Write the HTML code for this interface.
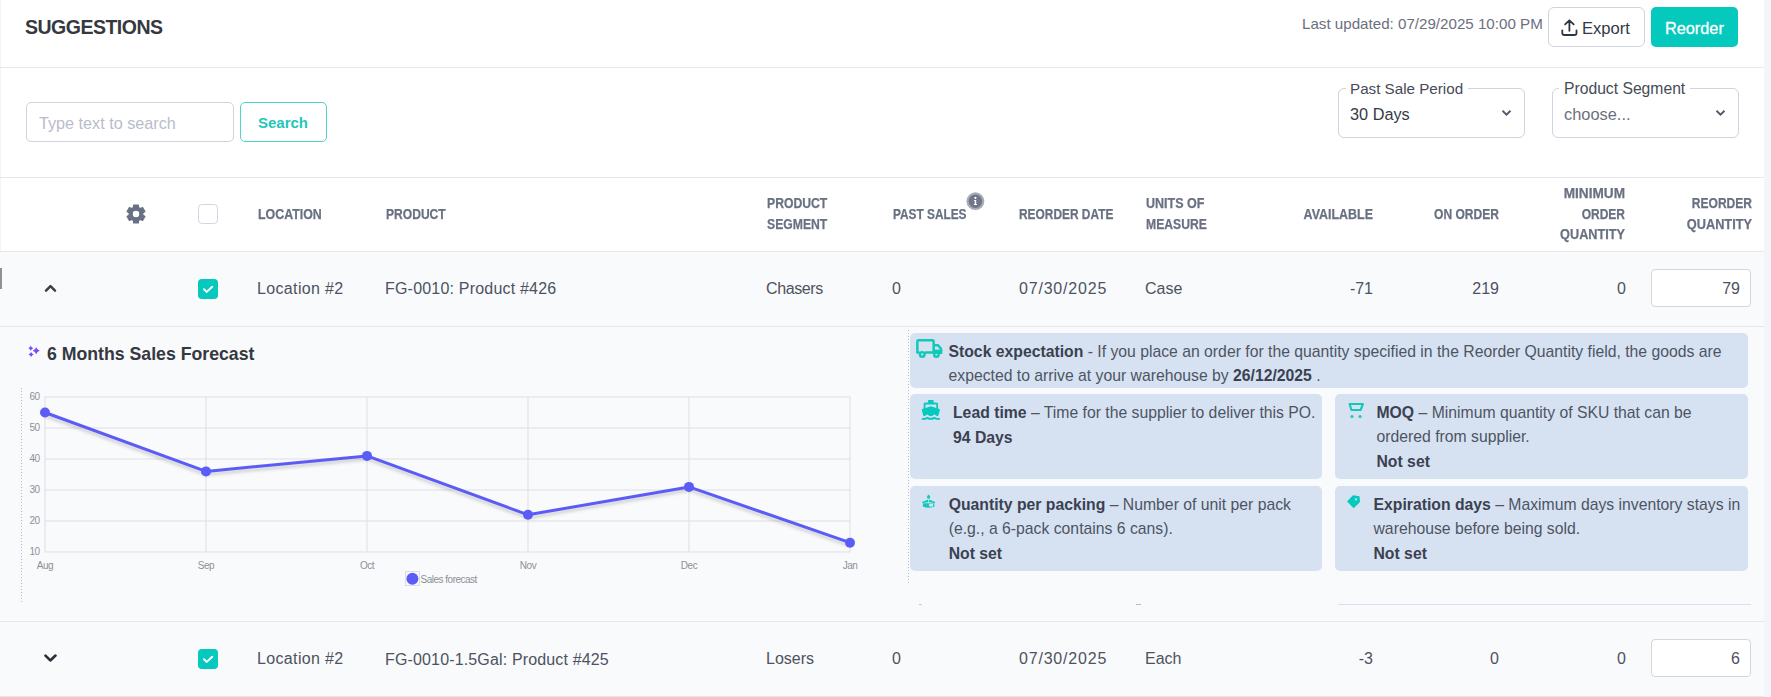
<!DOCTYPE html>
<html><head><meta charset="utf-8">
<style>
*{box-sizing:border-box;margin:0;padding:0}
html,body{width:1771px;height:697px;overflow:hidden;background:#f4f5f9;font-family:"Liberation Sans",sans-serif;color:#3f4451}
.a{position:absolute;white-space:nowrap}
#card{position:absolute;left:0;top:0;width:1764px;height:697px;background:#fff}
#lb{position:absolute;left:0;top:0;width:1px;height:697px;background:#f3f4f6}
.hl{position:absolute;left:0;height:1px;background:#e5e7eb}
.th{position:absolute;font-weight:bold;font-size:14.5px;color:#697081;-webkit-text-stroke:0.25px #697081;line-height:20.7px;white-space:nowrap;transform:scaleX(.845);transform-origin:0 0}
.th.r{transform-origin:100% 0;text-align:right}
.td{position:absolute;font-size:16px;color:#4d5260;white-space:nowrap;line-height:20px}
.r{text-align:right}
.cb{position:absolute;width:20px;height:20px;border-radius:4px}
.cb.on{background:#04c9bc}
.cb.off{border:1.5px solid #d3d5e1;background:#fff}
.box{position:absolute;background:#d6e2f2;border-radius:5px}
.it{position:absolute;font-size:15.75px;line-height:24.5px;color:#4e5462;white-space:nowrap}
.it b{color:#3b4150}
</style></head>
<body>
<div id="card">
<div id="lb"></div>
  <!-- header -->
  <div class="a" style="left:25px;top:15px;font-size:19.5px;letter-spacing:-0.5px;font-weight:bold;color:#353840;line-height:24px">SUGGESTIONS</div>
  <div class="a" style="left:1302px;top:14px;font-size:15.15px;color:#6b7080;line-height:20px">Last updated: 07/29/2025 10:00 PM</div>
  <div class="a" style="left:1547.5px;top:7px;width:97px;height:40px;border:1.5px solid #d0d3e0;border-radius:6px;background:#fff"></div>
  <svg class="a" style="left:1560px;top:19px" width="19" height="18" viewBox="0 0 19 18"><path d="M9.4 11.8V1.8M5.1 5.3L9.4 1.3l4.3 4M2.3 11.3v2.6Q2.3 16 4.4 16H14.4Q16.5 16 16.5 13.9V11.3" fill="none" stroke="#2f3440" stroke-width="1.8" stroke-linecap="round" stroke-linejoin="round"/></svg>
  <div class="a" style="left:1582px;top:19px;font-size:16.6px;color:#333844;line-height:20px">Export</div>
  <div class="a" style="left:1651px;top:7px;width:87px;height:40px;border-radius:5px;background:#04c9bc"></div>
  <div class="a" style="left:1665px;top:18px;font-size:16.3px;color:#fff;line-height:20px;-webkit-text-stroke:0.3px #fff">Reorder</div>
  <div class="hl" style="top:67px;width:1764px"></div>

  <!-- search -->
  <div class="a" style="left:25.5px;top:102px;width:208.5px;height:40px;border:1.5px solid #d0d3e0;border-radius:5px;background:#fff"></div>
  <div class="a" style="left:39px;top:113px;font-size:16.2px;color:#b9bdcb;line-height:20px">Type text to search</div>
  <div class="a" style="left:239.5px;top:102px;width:87.5px;height:40px;border:1.5px solid #4fd4c9;border-radius:5px;background:#fff"></div>
  <div class="a" style="left:258px;top:113px;font-size:15px;font-weight:bold;color:#1fc6b9;line-height:20px">Search</div>

  <!-- selects -->
  <div class="a" style="left:1337.5px;top:88px;width:187.5px;height:50px;border:1.5px solid #d0d3e0;border-radius:6px"></div>
  <div class="a" style="left:1346px;top:80px;width:122px;height:12px;background:#fff"></div>
  <div class="a" style="left:1350px;top:79px;font-size:15.2px;color:#464b57;line-height:20px">Past Sale Period</div>
  <div class="a" style="left:1350px;top:104px;font-size:16.3px;color:#353a45;line-height:20px">30 Days</div>
  <svg class="a" style="left:1501px;top:109px" width="11" height="8" viewBox="0 0 11 8"><path d="M1.5 1.8l4 3.8 4-3.8" fill="none" stroke="#555b68" stroke-width="2"/></svg>

  <div class="a" style="left:1551.5px;top:88px;width:187.5px;height:50px;border:1.5px solid #d0d3e0;border-radius:6px"></div>
  <div class="a" style="left:1559px;top:80px;width:131px;height:12px;background:#fff"></div>
  <div class="a" style="left:1564px;top:79px;font-size:15.7px;color:#464b57;line-height:20px">Product Segment</div>
  <div class="a" style="left:1564px;top:104px;font-size:16.4px;color:#6b7080;line-height:20px">choose...</div>
  <svg class="a" style="left:1715px;top:109px" width="11" height="8" viewBox="0 0 11 8"><path d="M1.5 1.8l4 3.8 4-3.8" fill="none" stroke="#555b68" stroke-width="2"/></svg>

  <div class="hl" style="top:177px;width:1764px"></div>

  <!-- table header -->
  <svg class="a" style="left:126.4px;top:203.5px" width="20" height="20" viewBox="0 0 20 20"><path fill="#687083" fill-rule="evenodd" stroke="#687083" stroke-width="1.1" stroke-linejoin="round" d="M7.42 3.60 L7.59 1.02 L12.41 1.02 L12.58 3.60 L14.25 4.56 L16.58 3.42 L18.98 7.59 L16.83 9.04 L16.83 10.96 L18.98 12.41 L16.58 16.58 L14.25 15.44 L12.58 16.40 L12.41 18.98 L7.59 18.98 L7.42 16.40 L5.75 15.44 L3.42 16.58 L1.02 12.41 L3.17 10.96 L3.17 9.04 L1.02 7.59 L3.42 3.42 L5.75 4.56Z M13.8 10 A3.8 3.8 0 1 0 6.2 10 A3.8 3.8 0 1 0 13.8 10Z"/></svg>
  <div class="cb off" style="left:198px;top:204px"></div>
  <div class="th" style="left:257.70px;top:204.23px;transform:scaleX(0.854)">LOCATION</div>
  <div class="th" style="left:385.50px;top:204.23px;transform:scaleX(0.833)">PRODUCT</div>
  <div class="th" style="left:766.70px;top:192.83px;transform:scaleX(0.841)">PRODUCT</div>
  <div class="th" style="left:766.70px;top:213.53px;transform:scaleX(0.841)">SEGMENT</div>
  <div class="th" style="left:892.90px;top:204.23px;transform:scaleX(0.817)">PAST SALES</div>
  <div class="th" style="left:1019.30px;top:204.23px;transform:scaleX(0.821)">REORDER DATE</div>
  <div class="th" style="left:1145.50px;top:192.83px;transform:scaleX(0.864)">UNITS OF</div>
  <div class="th" style="left:1145.50px;top:213.53px;transform:scaleX(0.839)">MEASURE</div>
  <div class="th r" style="left:1172.72px;width:200px;top:204.23px;transform:scaleX(0.859)">AVAILABLE</div>
  <div class="th r" style="left:1298.74px;width:200px;top:204.23px;transform:scaleX(0.831)">ON ORDER</div>
  <div class="th r" style="left:1425.43px;width:200px;top:182.93px;transform:scaleX(0.939)">MINIMUM</div>
  <div class="th r" style="left:1425.37px;width:200px;top:204.03px;transform:scaleX(0.828)">ORDER</div>
  <div class="th r" style="left:1425.41px;width:200px;top:223.93px;transform:scaleX(0.876)">QUANTITY</div>
  <div class="th r" style="left:1551.61px;width:200px;top:193.23px;transform:scaleX(0.830)">REORDER</div>
  <div class="th r" style="left:1551.61px;width:200px;top:213.63px;transform:scaleX(0.880)">QUANTITY</div>
  <svg class="a" style="left:965px;top:191px" width="21" height="21" viewBox="0 0 21 21"><circle cx="10.4" cy="10.2" r="8.9" fill="#a6abb6"/><circle cx="10.4" cy="10.2" r="6.7" fill="#717788"/><circle cx="10.4" cy="6.9" r="1.1" fill="#fff"/><path d="M9.1 9.1H11.2V12.9H12V14H8.9V12.9H9.7V10.1H9.1Z" fill="#fff"/></svg>
  <div class="hl" style="top:251px;width:1764px"></div>

  <!-- row 1 -->
  <div class="a" style="left:0;top:252px;width:1764px;height:445px;background:#f9fafc"></div>
  <div class="a" style="left:0;top:268px;width:2px;height:21px;background:#8e9198"></div>
  <svg class="a" style="left:40px;top:280px" width="20" height="16" viewBox="0 0 20 16"><path d="M6 10.6L10.5 6.1L15 10.6" fill="none" stroke="#3a3f4b" stroke-width="2.5" stroke-linecap="round" stroke-linejoin="round"/></svg>
  <div class="cb on" style="left:198px;top:279px"></div>
  <svg class="a" style="left:198px;top:279px" width="20" height="20" viewBox="0 0 20 20"><path d="M6 10.3l2.8 2.6 5.4-5.2" fill="none" stroke="#fff" stroke-width="2" stroke-linecap="round" stroke-linejoin="round"/></svg>
  <div class="td" style="left:257px;top:279px;letter-spacing:0.35px">Location #2</div>
  <div class="td" style="left:385px;top:279px;letter-spacing:0.2px">FG-0010: Product #426</div>
  <div class="td" style="left:766px;top:279px;letter-spacing:-0.4px">Chasers</div>
  <div class="td" style="left:892px;top:279px">0</div>
  <div class="td" style="left:1019px;top:279px;letter-spacing:0.8px">07/30/2025</div>
  <div class="td" style="left:1145px;top:279px">Case</div>
  <div class="td r" style="left:1250px;width:123px;top:279px">-71</div>
  <div class="td r" style="left:1380px;width:119px;top:279px">219</div>
  <div class="td r" style="left:1500px;width:126px;top:279px">0</div>
  <div class="a" style="left:1651px;top:269px;width:100px;height:38px;border:1px solid #d4d6dc;border-radius:4px;background:#fff"></div>
  <div class="td r" style="left:1660px;width:80px;top:279px">79</div>
  <div class="hl" style="top:326px;width:1764px"></div>

  <!-- expanded -->
    <!-- forecast -->
  <svg class="a" style="left:25px;top:343px" width="18" height="18" viewBox="0 0 18 18"><path fill="#7b4cf6" d="M5.80 2.80Q6.50 4.60 8.30 5.30Q6.50 6.00 5.80 7.80Q5.10 6.00 3.30 5.30Q5.10 4.60 5.80 2.80ZM6.10 8.90Q6.83 10.77 8.70 11.50Q6.83 12.23 6.10 14.10Q5.37 12.23 3.50 11.50Q5.37 10.77 6.10 8.90ZM11.20 4.30Q12.18 6.82 14.70 7.80Q12.18 8.78 11.20 11.30Q10.22 8.78 7.70 7.80Q10.22 6.82 11.20 4.30Z"/></svg>
  <div class="a" style="left:47px;top:344px;font-size:17.7px;font-weight:bold;color:#353840;line-height:20px">6 Months Sales Forecast</div>
  <svg class="a" style="left:0;top:326px" width="912" height="295" viewBox="0 326 912 295">
    <defs><filter id="sh" x="-5%" y="-20%" width="110%" height="140%"><feGaussianBlur stdDeviation="1.5"/></filter></defs>
    <line x1="21.5" y1="388" x2="21.5" y2="604" stroke="#b9bcc4" stroke-width="1" stroke-dasharray="1 2"/>
    <line x1="908.5" y1="330" x2="908.5" y2="585" stroke="#b9bcc4" stroke-width="1" stroke-dasharray="1 2"/>
    <g stroke="#dedfe3" stroke-width="1" fill="none">
      <path d="M45 397H850.5M45 428H850.5M45 459H850.5M45 490H850.5M45 521H850.5M45 552H850.5"/>
      <path d="M45 397V552M206 397V552M367 397V552M528 397V552M689 397V552M850 397V552"/>
    </g>
    <g font-family="Liberation Sans" font-size="10" fill="#8e9096" text-anchor="end" letter-spacing="-0.5">
      <text x="39.5" y="399.5">60</text><text x="39.5" y="430.5">50</text><text x="39.5" y="461.5">40</text><text x="39.5" y="492.5">30</text><text x="39.5" y="523.5">20</text><text x="39.5" y="554.5">10</text>
    </g>
    <g font-family="Liberation Sans" font-size="10" fill="#8e9096" text-anchor="middle" letter-spacing="-0.5">
      <text x="45" y="568.5">Aug</text><text x="206" y="568.5">Sep</text><text x="367" y="568.5">Oct</text><text x="528" y="568.5">Nov</text><text x="689" y="568.5">Dec</text><text x="850" y="568.5">Jan</text>
    </g>
    <polyline points="45,415.5 206,474.4 367,458.9 528,517.8 689,489.9 850,545.7" fill="none" stroke="#555" stroke-opacity="0.25" stroke-width="3" filter="url(#sh)"/>
    <polyline points="45,412.5 206,471.4 367,455.9 528,514.8 689,486.9 850,542.7" fill="none" stroke="#5b5cf6" stroke-width="3" stroke-linejoin="round"/>
    <g fill="#5b5cf6">
      <circle cx="45" cy="412.5" r="5"/><circle cx="206" cy="471.4" r="5"/><circle cx="367" cy="455.9" r="5"/><circle cx="528" cy="514.8" r="5"/><circle cx="689" cy="486.9" r="5"/><circle cx="850" cy="542.7" r="5"/>
    </g>
    <rect x="405.5" y="571.5" width="14" height="14" fill="none" stroke="#dcdde2" stroke-width="1"/>
    <circle cx="412.4" cy="578.8" r="6" fill="#5b5cf6"/>
    <text x="420.5" y="582.5" font-family="Liberation Sans" font-size="10" fill="#8e9096" letter-spacing="-0.5">Sales forecast</text>
  </svg>

  <!-- info boxes -->
  <div class="box" style="left:910px;top:333px;width:838px;height:55px"></div>
  <svg class="a" style="left:912px;top:335px" width="34" height="27" viewBox="0 0 34 27"><g fill="none" stroke="#12c9b7" stroke-width="2.5" stroke-linejoin="round"><path d="M7.6 17.4H5.35V6.4Q5.35 5.15 6.6 5.15H20.4Q21.65 5.15 21.65 6.4V17.4H13"/><path d="M21.65 10.35H26.1L29 13.7V17.8H27.8"/></g><path d="M21.65 14.6H30.2V19H21.65Z" fill="#12c9b7"/><g fill="none" stroke="#12c9b7" stroke-width="2.4"><circle cx="10.2" cy="19.4" r="2.3"/><circle cx="24.4" cy="19.4" r="2.3"/></g></svg>
  <div class="it" style="left:948.5px;top:339.6px"><b>Stock expectation</b> - If you place an order for the quantity specified in the Reorder Quantity field, the goods are<br>expected to arrive at your warehouse by <b>26/12/2025</b> .</div>

  <div class="box" style="left:910px;top:394px;width:412px;height:84.5px"></div>
  <svg class="a" style="left:920.2px;top:398.9px" width="21.7" height="21.7" viewBox="0 0 24 24"><path fill="#04c9bc" d="M20 21c-1.39 0-2.78-.47-4-1.32-2.44 1.71-5.56 1.71-8 0C6.78 20.53 5.39 21 4 21H2v2h2c1.38 0 2.74-.35 4-.99 2.52 1.29 5.48 1.29 8 0 1.26.65 2.62.99 4 .99h2v-2h-2zM3.95 19H4c1.6 0 3.02-.88 4-2 .98 1.12 2.4 2 4 2s3.02-.88 4-2c.98 1.12 2.4 2 4 2h.05l1.89-6.68c.08-.26.06-.54-.06-.78s-.34-.42-.6-.5L20 10.62V6c0-1.1-.9-2-2-2h-3V1H9v3H6c-1.1 0-2 .9-2 2v4.62l-1.29.42c-.26.08-.48.26-.6.5s-.15.52-.06.78L3.95 19zM6 6h12v3.97L12 8 6 9.97V6z"/></svg>
  <div class="it" style="left:953px;top:401px"><b>Lead time</b> – Time for the supplier to deliver this PO.<br><b>94 Days</b></div>

  <div class="box" style="left:1335px;top:394px;width:413px;height:84.5px"></div>
  <svg class="a" style="left:1348px;top:402px" width="16" height="17" viewBox="0 0 16 17"><path d="M1.6 2.0H14.9L12.6 8.0H3.4Z" fill="none" stroke="#12c9b7" stroke-width="2.1" stroke-linejoin="round"/><circle cx="4" cy="14.5" r="1.6" fill="#1dcbb8"/><circle cx="12.1" cy="14.5" r="1.6" fill="#1dcbb8"/></svg>
  <div class="it" style="left:1376.5px;top:400.8px"><b>MOQ</b> – Minimum quantity of SKU that can be<br>ordered from supplier.<br><b>Not set</b></div>

  <div class="box" style="left:910px;top:486px;width:412px;height:84.5px"></div>
  <svg class="a" style="left:916px;top:490px" width="26" height="22" viewBox="0 0 26 22"><g fill="#12c9b7"><path d="M12.6 4.4Q14.3 6.3 14.3 7.1A1.7 1.7 0 0 1 10.9 7.1Q10.9 6.3 12.6 4.4Z"/><path d="M12.2 9.4L12.2 12.3L6.4 13L5.9 11.9Z"/><path d="M13 9.4L19.3 11.9L18.8 13L13 12.3Z"/><path fill-rule="evenodd" d="M6.9 13.2H18.3V16.8Q12.6 18.9 6.9 16.8ZM13.1 13.7V16.4H17.1V13.7Z"/></g></svg>
  <div class="it" style="left:948.7px;top:492.8px"><b>Quantity per packing</b> – Number of unit per pack<br>(e.g., a 6-pack contains 6 cans).<br><b>Not set</b></div>

  <div class="box" style="left:1335px;top:486px;width:413px;height:84.5px"></div>
  <svg class="a" style="left:1346px;top:494px" width="15" height="15" viewBox="0 0 15 15"><path d="M7 1.2L13.5 2.2L14 8L7.7 14.2L1 7.5Z" fill="#04c9bc"/><circle cx="10" cy="5.4" r="1.1" fill="#d6e2f2"/></svg>
  <div class="it" style="left:1373.5px;top:492.5px"><b>Expiration days</b> – Maximum days inventory stays in<br>warehouse before being sold.<br><b>Not set</b></div>

  <div class="a" style="left:1338px;top:604px;width:413px;height:1px;background:#d5e1f1"></div>
  <div class="a" style="left:919px;top:604px;width:3px;height:1px;background:#c8cacf"></div>
  <div class="a" style="left:1136px;top:604px;width:5px;height:1px;background:#b8bac0"></div>


  <div class="hl" style="top:621px;width:1764px"></div>
  <!-- row 2 -->
  <svg class="a" style="left:40px;top:650px" width="20" height="16" viewBox="0 0 20 16"><path d="M5.5 5.6L10.3 10.4L15.5 5.6" fill="none" stroke="#2c303a" stroke-width="2.7" stroke-linecap="round" stroke-linejoin="round"/></svg>
  <div class="cb on" style="left:198px;top:649px"></div>
  <svg class="a" style="left:198px;top:649px" width="20" height="20" viewBox="0 0 20 20"><path d="M6 10.3l2.8 2.6 5.4-5.2" fill="none" stroke="#fff" stroke-width="2" stroke-linecap="round" stroke-linejoin="round"/></svg>
  <div class="td" style="left:257px;top:649px;letter-spacing:0.35px">Location #2</div>
  <div class="td" style="left:385px;top:649.5px;letter-spacing:0.15px">FG-0010-1.5Gal: Product #425</div>
  <div class="td" style="left:766px;top:649px">Losers</div>
  <div class="td" style="left:892px;top:649px">0</div>
  <div class="td" style="left:1019px;top:649px;letter-spacing:0.8px">07/30/2025</div>
  <div class="td" style="left:1145px;top:649px">Each</div>
  <div class="td r" style="left:1250px;width:123px;top:649px">-3</div>
  <div class="td r" style="left:1380px;width:119px;top:649px">0</div>
  <div class="td r" style="left:1500px;width:126px;top:649px">0</div>
  <div class="a" style="left:1651px;top:639px;width:100px;height:38px;border:1px solid #d4d6dc;border-radius:4px;background:#fff"></div>
  <div class="td r" style="left:1660px;width:80px;top:649px">6</div>
  <div class="hl" style="top:696px;width:1764px"></div>
</div>
</body></html>
